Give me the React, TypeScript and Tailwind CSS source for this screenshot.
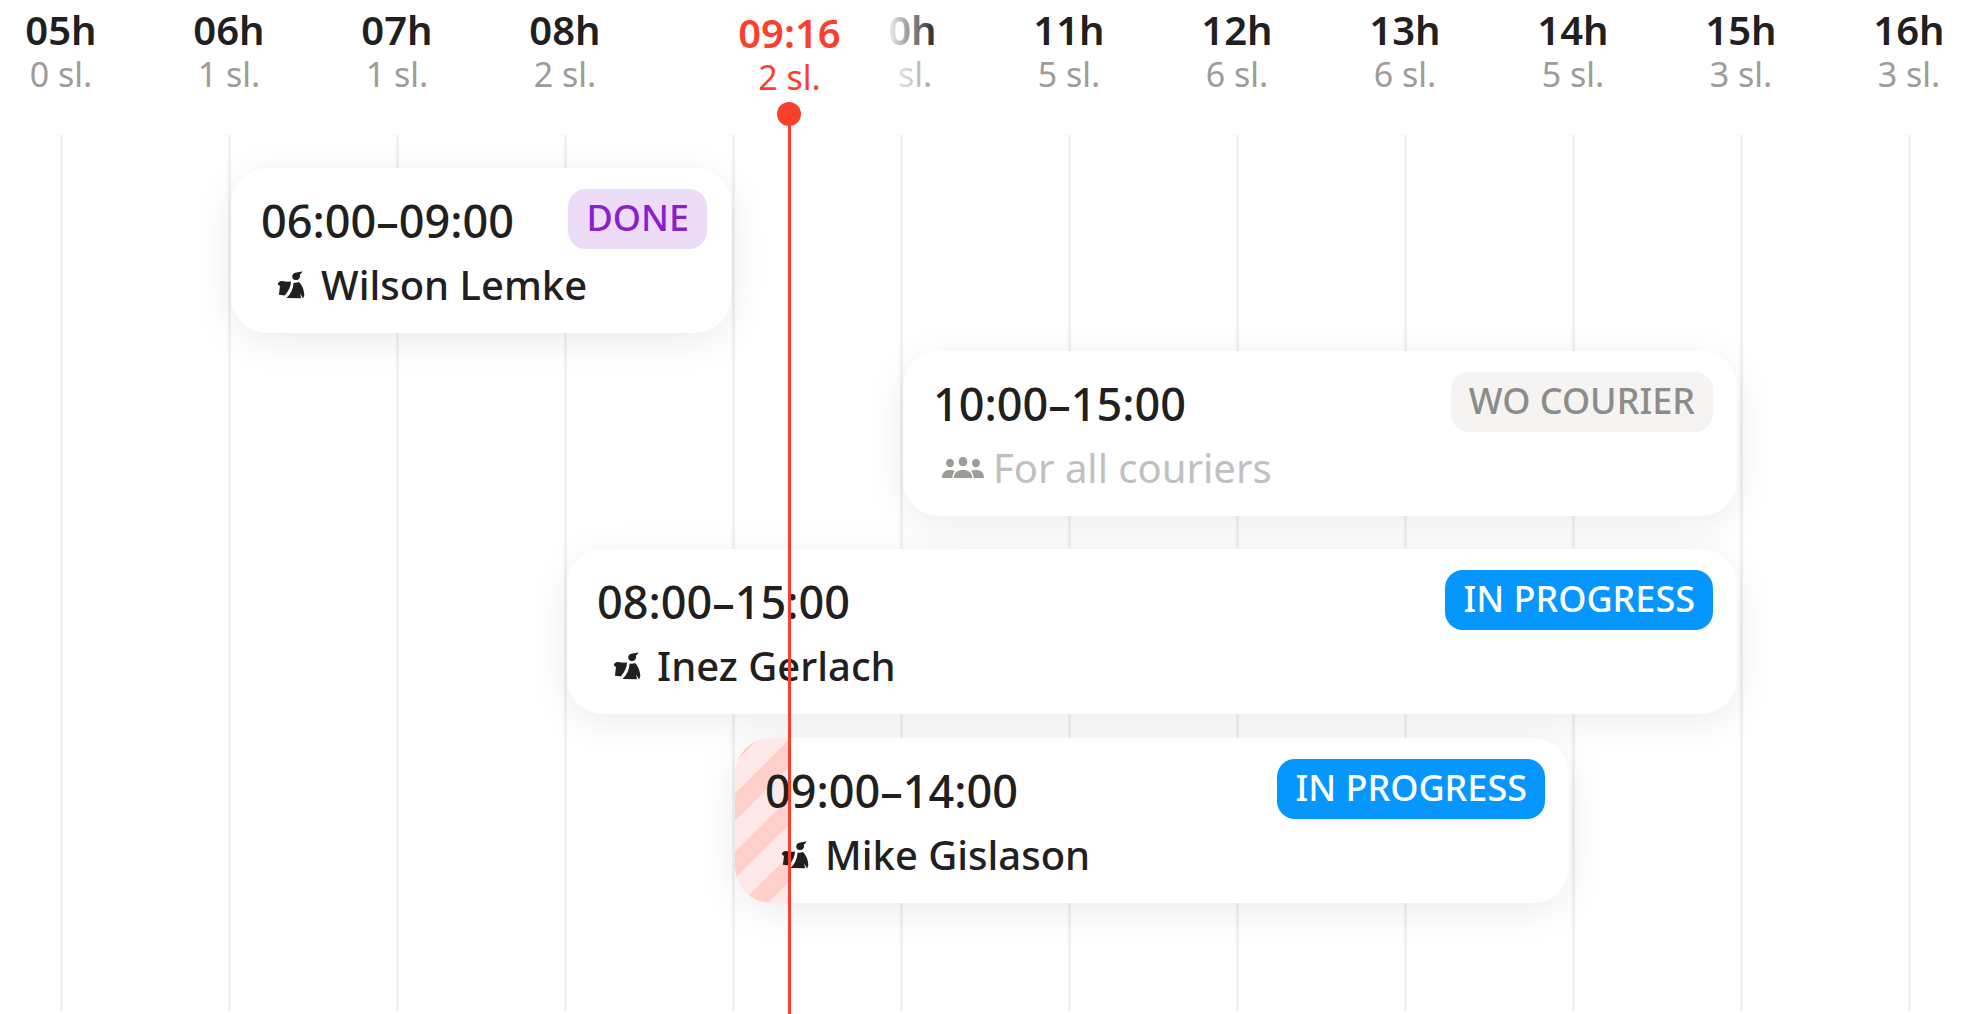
import type { CSSProperties, ReactNode } from 'react';
import clsx from 'clsx';

type Status = 'done' | 'free' | 'progress';

type Slot = {
  id: string;
  from: number;
  to: number;
  name?: string;
  status: Status;
  late?: boolean;
  className: string;
};

const FIRST_HOUR = 5;
const NOW = { label: '09:16', slots: 2, hour: 9, position: 4.836 };

const hours = [0, 1, 1, 2, 2, 3, 5, 6, 6, 5, 3, 3].map((slots, i) => ({
  hour: FIRST_HOUR + i,
  slots,
}));

const slots: Slot[] = [
  { id: 'wilson', from: 6, to: 9, name: 'Wilson Lemke', status: 'done', className: 'row-start-1 mr-[2px] mb-[18px]' },
  { id: 'free', from: 10, to: 15, status: 'free', className: 'row-start-2 mr-1 mb-[33px]' },
  { id: 'inez', from: 8, to: 15, name: 'Inez Gerlach', status: 'progress', className: 'row-start-3 mr-1 mb-6' },
  { id: 'mike', from: 9, to: 14, name: 'Mike Gislason', status: 'progress', late: true, className: 'row-start-4 mr-1' },
];

const badges: Record<Status, { label: string; className: string }> = {
  done: { label: 'DONE', className: 'bg-[#ecdcf8] text-[#8a1fd0]' },
  free: { label: 'WO COURIER', className: 'bg-[#f5f4f2] text-[#8c8c8b]' },
  progress: { label: 'IN PROGRESS', className: 'bg-[#0596ff] text-white' },
};

const pad = (n: number) => String(n).padStart(2, '0');

// every hour takes two grid tracks, its line runs between them
const track = (hour: number) => (hour - FIRST_HOUR) * 2 + 2;

function CourierIcon() {
  return (
    <svg viewBox="0 0 84 86" className="w-7 h-7" fill="currentColor" aria-hidden="true">
      <path d="M48 10C54 3 62 6 77 1C76 6 73 9 69 11C72 20 67 28 58 28C47 28 43 18 48 10Z" />
      <path d="M1 41C4 33 9 30 15 31L30 33L42 32C42 46 35 61 23 75L5 73L8 46Z" />
      <path d="M50 35C55 37 62 36 66 34C76 42 82 58 83 74L79 85L70 68L73 84L28 83C42 70 49 54 50 35Z" />
    </svg>
  );
}

function GroupIcon() {
  return (
    <svg viewBox="0 0 126 66" className="w-[42px] h-[22px] text-[#9e9b98]" fill="currentColor" aria-hidden="true">
      <ellipse cx="24" cy="18" rx="12" ry="13" />
      <ellipse cx="102" cy="18" rx="12" ry="13" />
      <ellipse cx="63" cy="14" rx="13" ry="14" />
      <path d="M0 63C0 46 10 39 24 39C30 39 35 40 39 42C34 47 32 53 31 63Z" />
      <path d="M126 63C126 46 116 39 102 39C96 39 91 40 87 42C92 47 94 53 95 63Z" />
      <path d="M35 63C36 47 47 39 63 39S90 47 91 63Z" />
    </svg>
  );
}

function HourLabel({ title, count, className }: { title: ReactNode; count: number; className?: string }) {
  return (
    <div className={clsx('flex flex-col items-center whitespace-nowrap', className)}>
      <span className="text-[40px] leading-[44px] font-semibold">{title}</span>
      <span className="text-[34px] leading-[44px]">{count} sl.</span>
    </div>
  );
}

function SlotCard({ slot }: { slot: Slot }) {
  const badge = badges[slot.status];
  const style: CSSProperties = { gridColumn: `${track(slot.from)} / ${track(slot.to)}` };

  return (
    <article
      style={style}
      className={clsx(
        'relative overflow-hidden ml-[2px] h-[165px] rounded-[36px] bg-white shadow-[0_8px_40px_rgba(0,0,0,0.08)]',
        slot.className,
      )}
    >
      {slot.late && (
        <div className="absolute inset-y-0 left-0 w-[54px] bg-[repeating-linear-gradient(135deg,#ffcfcb_0px,#ffcfcb_17px,#ffe9e8_17px,#ffe9e8_39px,#ffcfcb_39px,#ffcfcb_41px)]" />
      )}
      <div className="relative flex items-start justify-between pl-[30px] pr-6 pt-[21px]">
        <time className="text-[45px] leading-[64px] font-medium">
          {pad(slot.from)}:00–{pad(slot.to)}:00
        </time>
        <span
          className={clsx('h-15 rounded-[18px] px-[18px] text-[36px] leading-[58px] font-medium', badge.className)}
        >
          {badge.label}
        </span>
      </div>
      <div className="relative flex items-center pl-[30px] text-[40px] leading-[64px]">
        <span className="flex w-15 shrink-0 justify-center">{slot.name ? <CourierIcon /> : <GroupIcon />}</span>
        {slot.name ? (
          <span className="font-medium">{slot.name}</span>
        ) : (
          <span className="text-[#c0c0c0]">For all couriers</span>
        )}
      </div>
    </article>
  );
}

export default function App() {
  const nowStyle: CSSProperties = { left: `${(NOW.position / hours.length) * 100}%` };

  return (
    <main className="min-h-screen overflow-hidden bg-white font-['Noto_Sans',sans-serif] text-[#21201f]">
      <div className="relative flex min-h-screen flex-col ml-[-23px] mr-[-22px]">
        <header className="grid h-[135px] grid-cols-12 pt-2">
          {hours.map(({ hour, slots: count }) =>
            // the current hour gives way to the red marker
            hour === NOW.hour ? (
              <span key={hour} />
            ) : (
              <HourLabel
                key={hour}
                title={`${pad(hour)}h`}
                count={count}
                className="[&>span:last-child]:text-[#9e9b98]"
              />
            ),
          )}
        </header>

        <section className="relative flex-1 pt-[33px] mb-[3px]">
          <div className="absolute inset-0 grid grid-cols-12" aria-hidden="true">
            {hours.map(({ hour }) => (
              <span key={hour} className="w-[3px] justify-self-center bg-[#f2f1f0]" />
            ))}
          </div>
          <div className="relative grid grid-cols-24">
            {slots.map((slot) => (
              <SlotCard key={slot.id} slot={slot} />
            ))}
          </div>
        </section>

        <div style={nowStyle} className="absolute inset-y-0 flex w-[296px] -translate-x-1/2 flex-col items-center">
          <div className="w-full bg-[linear-gradient(90deg,transparent,white_52px,white_244px,transparent)] pt-[11px] pb-[3px] text-[#fc3f2c]">
            <HourLabel title={NOW.label} count={NOW.slots} />
          </div>
          <span className="size-6 shrink-0 rounded-full bg-[#fc3f2c]" />
          <span className="w-[3px] flex-1 bg-[#fc3f2c]" />
        </div>
      </div>
    </main>
  );
}
